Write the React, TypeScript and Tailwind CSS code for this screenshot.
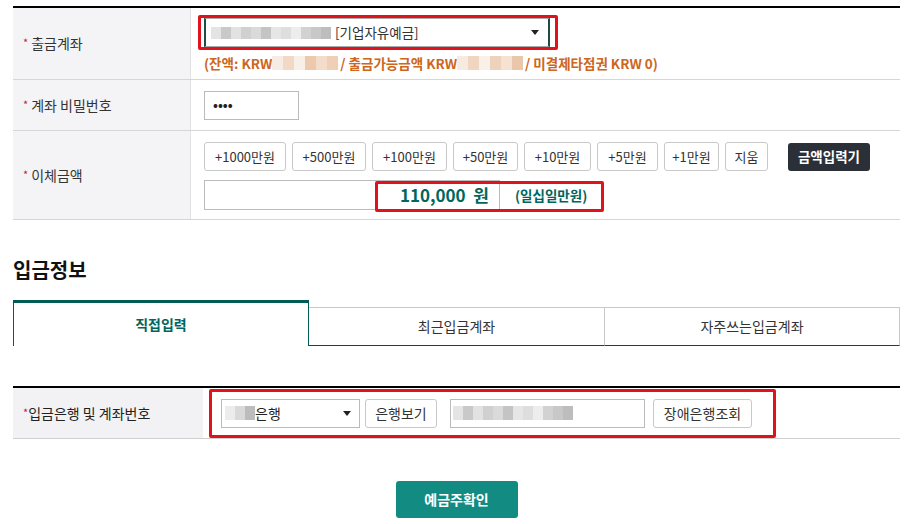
import React from 'react';

const font = { fontFamily: '"Noto Sans CJK KR", "Noto Sans", sans-serif' };

// pixelated "blurred" blocks that stand in for masked account data
const Mosaic: React.FC<{ cells: string[]; h?: string; w?: string }> = ({ cells, h = 'h-[12px]', w = 'w-[10px]' }) => (
  <span className={`inline-flex items-stretch ${h}`}>
    {cells.map((c, i) => (
      <span key={i} className={`${w} ${c}`} />
    ))}
  </span>
);

const grayCells = [
  'bg-[#e4e4e4]', 'bg-[#c9c9c9]', 'bg-[#e2e2e2]', 'bg-[#d0d0d0]', 'bg-[#dadada]',
  'bg-[#c4c4c4]', 'bg-[#e6e6e6]', 'bg-[#dedede]', 'bg-[#ededed]', 'bg-[#d2d2d2]',
  'bg-[#c8c8c8]', 'bg-[#bdbdbd]',
];
const peachCells = [
  'bg-[#f6ece4]', 'bg-[#f1d9c6]', 'bg-[#f8efe7]', 'bg-[#ecc9ad]', 'bg-[#f3dcc9]', 'bg-[#efcfb6]',
];
const peachCells2 = [
  'bg-[#f7ebe1]', 'bg-[#f0d6c1]', 'bg-[#f9f0e8]', 'bg-[#eed2bb]', 'bg-[#f5e2d2]', 'bg-[#eac7aa]',
];

const Arrow = () => (
  <svg width="8" height="5" viewBox="0 0 8 5" className="shrink-0">
    <path d="M0 0h8L4 5z" fill="#222" />
  </svg>
);

const Req = () => <span className="text-[#d0104c] text-[11px] mr-[3px] relative -top-[1px]">*</span>;

const quickAmounts: [string, string][] = [
  ['+1000만원', 'w-[82px]'],
  ['+500만원', 'w-[74px]'],
  ['+100만원', 'w-[75px]'],
  ['+50만원', 'w-[65px]'],
  ['+10만원', 'w-[67px]'],
  ['+5만원', 'w-[61px]'],
  ['+1만원', 'w-[55px]'],
  ['지움', 'w-[43px]'],
];

const btn =
  'h-[29px] border border-[#c9c9c9] rounded-[3px] bg-white text-[13px] text-[#333] flex items-center justify-center';

const labelCls =
  'w-[178px] bg-[#f4f4f6] border-r border-[#e2e2e2] flex items-center pl-[10px] text-[14px] text-[#333]';

export default function App() {
  return (
    <div className="bg-white w-[910px] h-[524px] overflow-hidden pt-[6px]" style={font}>
      <div className="ml-[13px] w-[887px]">
        {/* 출금정보 */}
        <div className="border-t-2 border-black">
          <div className="flex h-[72px] border-b border-[#d6d6d6]">
            <div className={labelCls}>
              <Req />출금계좌
            </div>
            <div className="flex-1 pl-[13px] pt-[10px] relative">
              <div className="w-[346px] h-[29px] border border-[#aaa] border-l-2 border-l-[#1d4b48] border-r-2 border-r-[#1d4b48] flex items-center pl-[5px] pr-[9px] text-[13.5px] text-[#333]">
                <Mosaic cells={grayCells} />
                <span className="ml-[4px]">[기업자유예금]</span>
                <span className="flex-1" />
                <Arrow />
              </div>
              <div className="absolute left-[7px] top-[7px] w-[360px] h-[35px] border-[3px] border-[#e0121b] rounded-[2px]" />
              <div className="mt-[6px] text-[13.5px] font-bold text-[#cc6620] flex items-center whitespace-nowrap">
                (잔액: KRW
                <Mosaic cells={peachCells} h="h-[14px]" w="w-[11px]" />
                <span className="ml-[2px]">/ 출금가능금액 KRW</span>
                <Mosaic cells={peachCells2} h="h-[14px]" w="w-[11px]" />
                <span className="ml-[2px]">/ 미결제타점권 KRW 0)</span>
              </div>
            </div>
          </div>

          <div className="flex h-[51px] border-b border-[#d6d6d6]">
            <div className={labelCls}>
              <Req />계좌 비밀번호
            </div>
            <div className="flex-1 pl-[13px] flex items-center">
              <div className="w-[95px] h-[29px] border border-[#bbb] flex items-center pl-[8px] text-[13px] font-bold tracking-[0px] text-[#222]">
                ••••
              </div>
            </div>
          </div>

          <div className="flex h-[89px] border-b border-[#d6d6d6]">
            <div className={labelCls}>
              <Req />이체금액
            </div>
            <div className="flex-1 pl-[13px] pt-[11px] relative">
              <div className="flex items-center gap-[6px]">
                {quickAmounts.map(([a, w]) => (
                  <button key={a} className={`${btn} ${w}`}>
                    {a}
                  </button>
                ))}
                <button className="ml-[14px] w-[82px] h-[28px] rounded-[3px] bg-[#2b3038] text-white text-[13.5px] font-bold">
                  금액입력기
                </button>
              </div>
              <div className="flex items-center mt-[9px]">
                <div className="w-[296px] h-[30px] border border-[#bbb] flex items-center justify-end pr-[10px] text-[17px] font-bold text-[#00665d]">
                  110,000&nbsp;&nbsp;원
                </div>
                <span className="ml-[15px] text-[13.5px] font-bold text-[#00665d]">(일십일만원)</span>
              </div>
              <div className="absolute left-[184px] top-[50px] w-[229px] h-[31px] border-[3px] border-[#e0121b] rounded-[2px]" />
            </div>
          </div>
        </div>

        {/* 입금정보 */}
        <h2 className="mt-[36px] text-[20px] font-bold text-[#111] leading-[28px]">입금정보</h2>

        <div className="mt-[16px] flex items-end h-[46px]">
          <div className="w-[296px] h-[46px] border-t-[3px] border-x border-[#005c54] flex items-center justify-center text-[14px] font-bold text-[#00665d]">
            직접입력
          </div>
          <div className="w-[296px] h-[39px] border-t border-r border-[#c8c8c8] border-b border-b-[#0b4a44] flex items-center justify-center text-[14px] text-[#333]">
            최근입금계좌
          </div>
          <div className="w-[295px] h-[39px] border-t border-r border-[#c8c8c8] border-b border-b-[#0b4a44] flex items-center justify-center text-[14px] text-[#333]">
            자주쓰는입금계좌
          </div>
        </div>

        <div className="mt-[40px] border-t-2 border-black">
          <div className="flex h-[51px] border-b border-[#cfcfcf] relative">
            <div className="w-[190px] bg-[#f2f2f4] flex items-center pl-[10px] text-[14px] text-[#222]">
              <span className="text-[#d0104c] text-[11px] relative -top-[1px]">*</span>입금은행 및 계좌번호
            </div>
            <div className="flex-1 pl-[18px] flex items-center">
              <div className="w-[139px] h-[29px] border border-[#bbb] flex items-center pl-[3px] pr-[8px] text-[14px] text-[#222]">
                <Mosaic cells={['bg-[#ececec]', 'bg-[#d9d9d9]', 'bg-[#bcbcbc]']} h="h-[14px]" />
                <span>은행</span>
                <span className="flex-1" />
                <Arrow />
              </div>
              <button className={`${btn} ml-[5px] w-[72px] text-[14px]`}>은행보기</button>
              <div className="ml-[13px] w-[195px] h-[29px] border border-[#bbb] flex items-center pl-[2px]">
                <Mosaic cells={grayCells} h="h-[14px]" />
              </div>
              <button className={`${btn} ml-[8px] w-[99px] text-[14px]`}>장애은행조회</button>
            </div>
            <div className="absolute left-[196px] top-[1px] w-[567px] h-[49px] border-[3px] border-[#e0121b] rounded-[2px]" />
          </div>
        </div>

        <div className="flex justify-center mt-[42px]">
          <button className="w-[122px] h-[37px] rounded-[3px] bg-[#128c83] text-white text-[14px] font-bold">
            예금주확인
          </button>
        </div>
      </div>
    </div>
  );
}
